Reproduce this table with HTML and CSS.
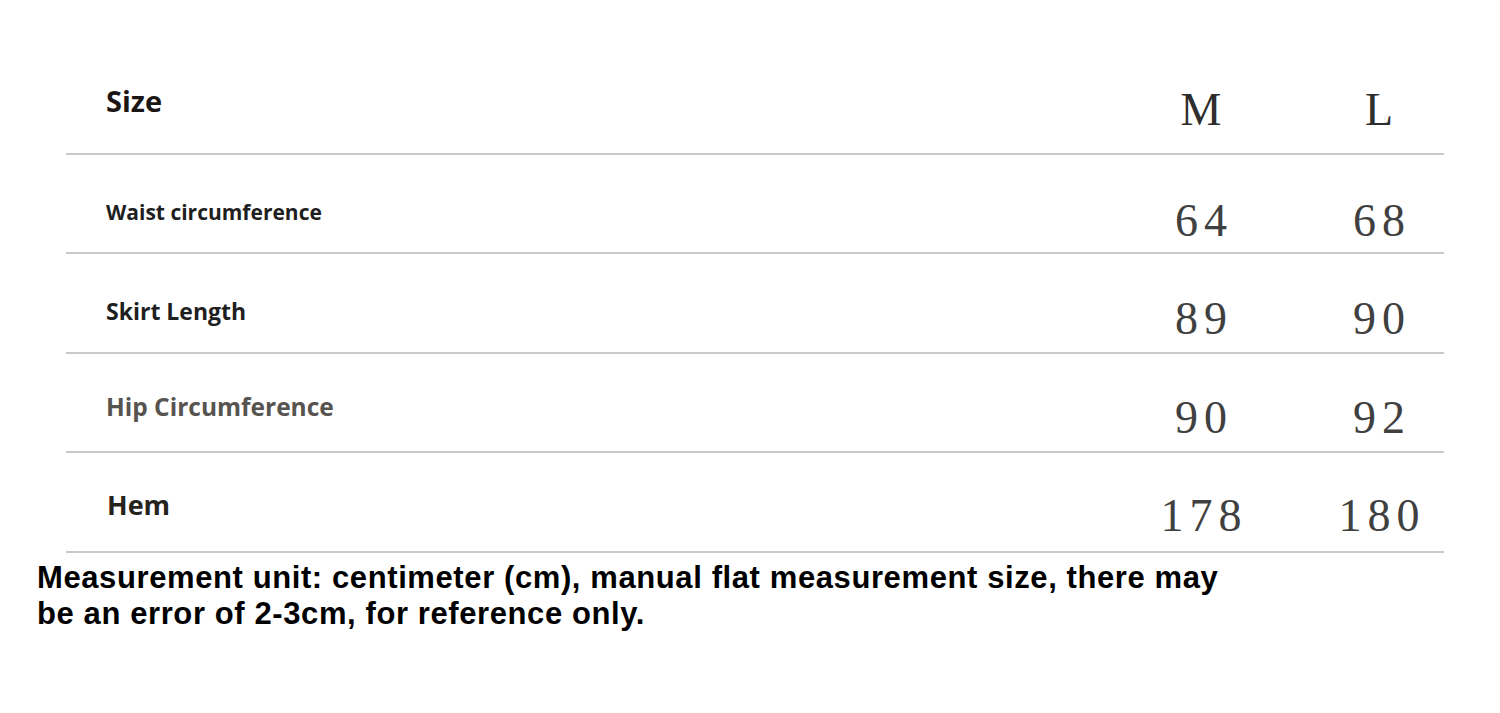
FILE: index.html
```html
<!DOCTYPE html>
<html lang="en">
<head>
<meta charset="utf-8">
<title>Size chart</title>
<link rel="stylesheet" href="styles.css">
</head>
<body>
<main class="page">
  <section class="table">
    <div class="row head">
      <div class="label l-size">Size</div>
      <div class="val size-letter">M</div>
      <div class="val size-letter">L</div>
    </div>
    <div class="row">
      <div class="label l-waist">Waist circumference</div>
      <div class="val num n1">64</div>
      <div class="val num n1">68</div>
    </div>
    <div class="row">
      <div class="label l-skirt">Skirt Length</div>
      <div class="val num n2">89</div>
      <div class="val num n2">90</div>
    </div>
    <div class="row">
      <div class="label l-hip">Hip Circumference</div>
      <div class="val num n3">90</div>
      <div class="val num n3">92</div>
    </div>
    <div class="row">
      <div class="label l-hem">Hem</div>
      <div class="val num n4">178</div>
      <div class="val num n4">180</div>
    </div>
  </section>
  <p class="note"><span class="note-line">Measurement unit: centimeter (cm), manual flat measurement size, there may</span><span class="note-line">be an error of 2-3cm, for reference only.</span></p>
</main>
</body>
</html>
```

FILE: styles.css
```css
html, body {
  margin: 0;
  padding: 0;
  background: #ffffff;
}
.page {
  width: 1500px;
  height: 713px;
  padding-top: 55px;
  box-sizing: border-box;
}
.table {
  margin-left: 66px;
  width: 1378px;
}
.row {
  display: grid;
  grid-template-columns: 1fr 130px 130px;
  column-gap: 48px;
  align-items: center;
  height: 97.5px;
  border-bottom: 2px solid #c9c9c9;
}
.label {
  padding-left: 40px;
  font-family: "Open Sans", "Noto Sans", sans-serif;
  font-weight: 700;
  color: #1f1f1f;
}
.l-size {
  font-size: 29px;
  color: #1b1613;
  padding-bottom: 6px;
}
.l-waist {
  font-size: 21px;
  padding-top: 18px;
}
.l-skirt {
  font-size: 23px;
  padding-top: 16px;
}
.l-hip {
  font-size: 24.5px;
  color: #57534f;
  padding-top: 8px;
}
.l-hem {
  font-size: 27px;
  color: #25231c;
  padding-left: 41px;
  padding-top: 6px;
}
.val {
  text-align: center;
  font-family: "Liberation Serif", "DejaVu Serif", serif;
  color: #404040;
}
.size-letter {
  font-size: 46px;
  padding-top: 12px;
  color: #2e2e2e;
}
.num {
  font-size: 46px;
  letter-spacing: 6px;
  text-indent: 6px;
}
.n1 {
  padding-top: 34px;
}
.n2 {
  padding-top: 32px;
}
.n3 {
  padding-top: 30px;
}
.n4 {
  padding-top: 28px;
}
.note {
  margin: 7px 0 0 37px;
  font-family: "Liberation Sans", Arial, sans-serif;
  font-weight: 700;
  font-size: 31px;
  line-height: 36px;
  letter-spacing: 0.6px;
  color: #000000;
}
.note-line {
  display: block;
}
```
